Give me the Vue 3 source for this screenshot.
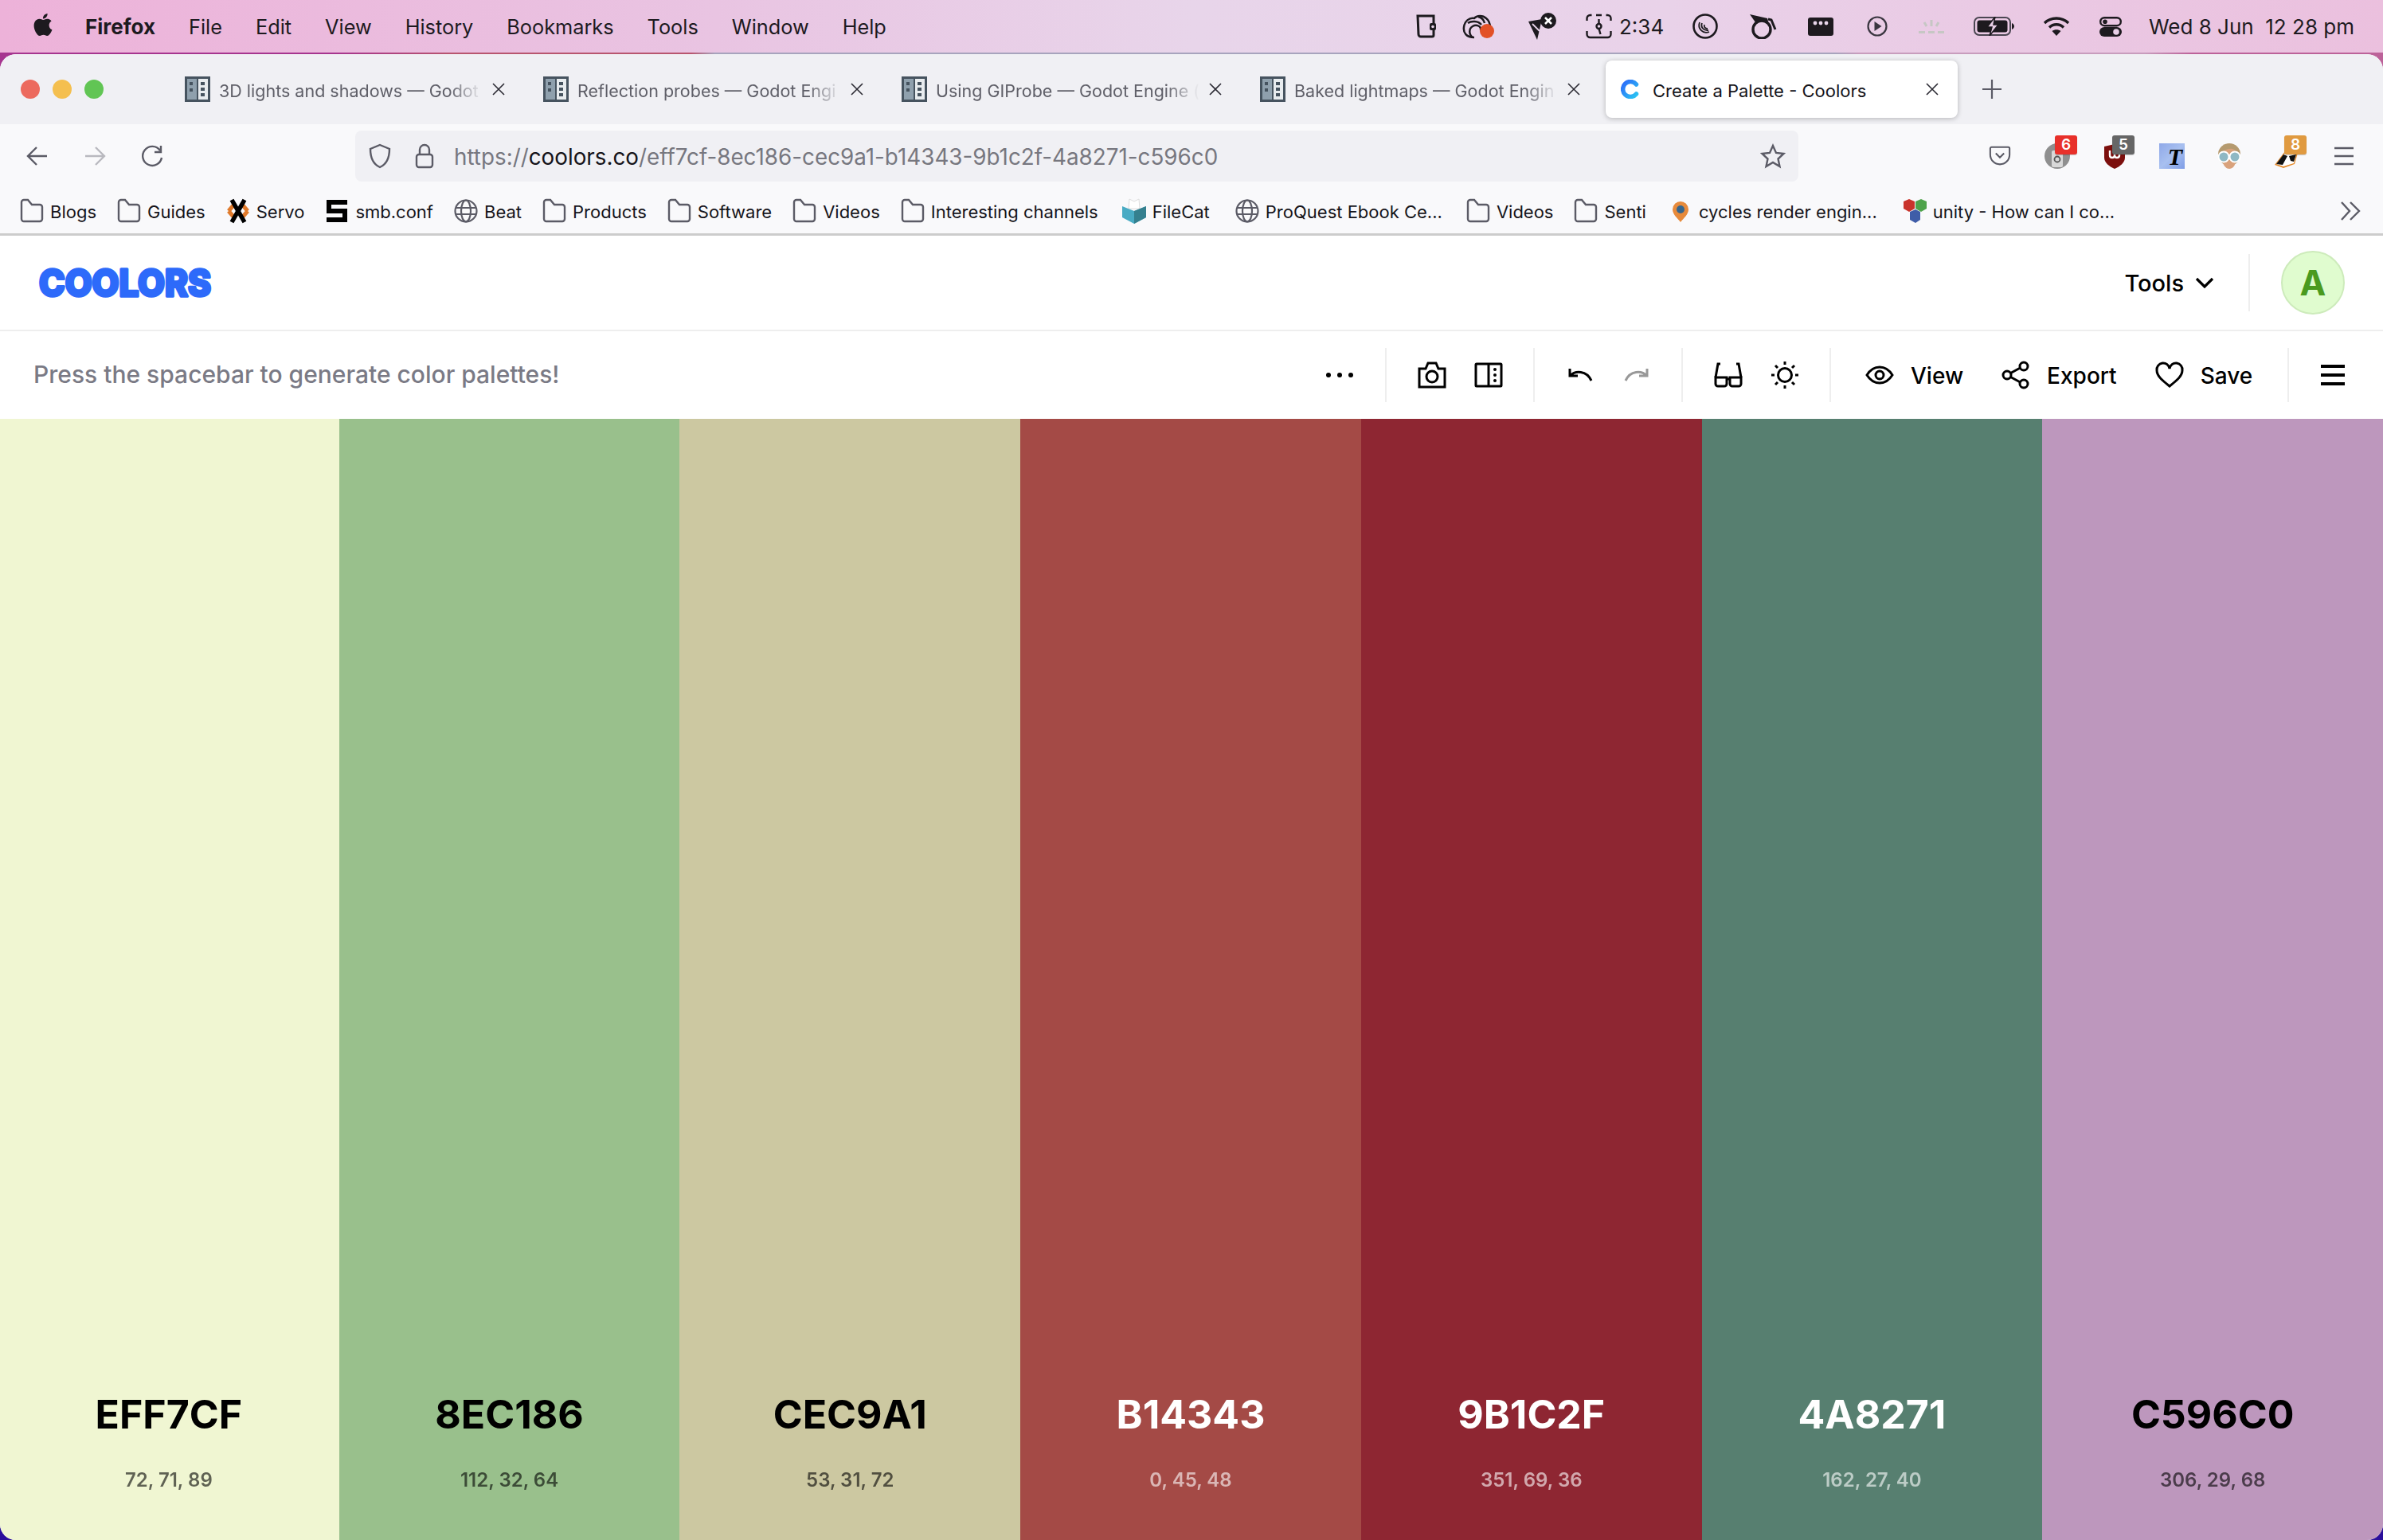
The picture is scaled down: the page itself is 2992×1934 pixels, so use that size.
<template>
  <div class="screen">
    <!-- mac menu bar -->
    <div class="menubar">
      <svg class="apple" viewBox="0 0 24 24"><path fill="#1d1a1f" d="M12.152 6.896c-.948 0-2.415-1.078-3.96-1.04-2.04.027-3.91 1.183-4.961 3.014-2.117 3.675-.546 9.103 1.519 12.09 1.013 1.454 2.208 3.09 3.792 3.039 1.52-.065 2.09-.987 3.935-.987 1.831 0 2.35.987 3.96.948 1.637-.026 2.676-1.48 3.676-2.948 1.156-1.688 1.636-3.325 1.662-3.415-.039-.013-3.182-1.221-3.22-4.857-.026-3.04 2.48-4.494 2.597-4.559-1.429-2.09-3.623-2.324-4.39-2.376-2-.156-3.675 1.09-4.61 1.09zM15.53 3.83c.843-1.012 1.4-2.427 1.245-3.83-1.207.052-2.662.805-3.532 1.818-.78.896-1.454 2.338-1.273 3.714 1.338.104 2.715-.688 3.559-1.701"/></svg>
      <span class="app-name">Firefox</span>
      <span v-for="m in menus" :key="m" class="menu">{{ m }}</span>

      <div class="status">
        <svg class="st st-phone" viewBox="0 0 26 32"><path fill="none" stroke="#1d1a1f" stroke-width="3" d="M3 3h20v24a2 2 0 0 1-2 2H7a3 3 0 0 1-3-3z"/><rect x="18" y="12" width="8" height="9" rx="2" fill="#1d1a1f"/><circle cx="22" cy="16.500" r="1.800" fill="#e8d5ea"/></svg>
        <svg class="st st-cloud" viewBox="0 0 40 32"><g fill="none" stroke="#1d1a1f" stroke-width="2.500"><path d="M15 30C5 30 1 24 2 17 3 9 9 5 15 6c3-4 11-4 15 0 4 3 5 8 5 12"/><path d="M13 30c-5-4-5-11 0-14s11 0 10 5M7 12c4-3 13-3 17 2M20 4c4 1 7 4 8 8"/></g><circle cx="31" cy="22" r="9" fill="#e25026"/></svg>
        <svg class="st st-map" viewBox="0 0 36 34"><path fill="#1d1a1f" d="M0 11l17-3-6 26z"/><path fill="none" stroke="#e8d5ea" stroke-width="1.800" d="M5 14l9 9"/><circle cx="25" cy="10" r="10" fill="#1d1a1f"/><path stroke="#fff" stroke-width="2.500" d="M21 6l8 8m0-8l-8 8"/></svg>
        <svg class="st st-clock" viewBox="0 0 33 32"><g fill="none" stroke="#1d1a1f" stroke-width="2.400"><path d="M1.500 9V6a4 4 0 0 1 4-4h2M31.500 9V6a4 4 0 0 0-4-4h-2M1.500 22v4a4 4 0 0 0 4 4h22a4 4 0 0 0 4-4v-4M13 2h7"/><circle cx="16.500" cy="16" r="3"/><path d="M16.500 7v6M16.500 19l2 7"/></g></svg>
        <span class="st-time">2:34</span>
        <svg class="st st-disc" viewBox="0 0 32 32"><circle cx="16" cy="16" r="14.500" fill="none" stroke="#1d1a1f" stroke-width="2.600"/><g fill="none" stroke="#1d1a1f" stroke-width="1.800"><path d="M9 11c-3 8 4 15 12 12"/><path d="M12 12c-2 5 2 10 8 9"/><path d="M15 14c-1 3 1 5 4 5"/></g></svg>
        <svg class="st st-kettle" viewBox="0 0 36 32"><path fill="#1d1a1f" d="M1 1l22 5 1 4-16 1z"/><circle cx="16" cy="20" r="11" fill="none" stroke="#1d1a1f" stroke-width="3.400"/><path fill="none" stroke="#1d1a1f" stroke-width="3" d="M24 7l4 1 5 12"/></svg>
        <svg class="st st-win" viewBox="0 0 32 23"><rect width="32" height="23" rx="3" fill="#1d1a1f"/><circle cx="9" cy="7" r="2.400" fill="#e8d5ea"/><circle cx="16" cy="7" r="2.400" fill="#e8d5ea"/><circle cx="23" cy="7" r="2.400" fill="#e8d5ea"/></svg>
        <svg class="st st-play" viewBox="0 0 26 26"><circle cx="13" cy="13" r="11.500" fill="none" stroke="#3a3640" stroke-width="2.200"/><path fill="#3a3640" d="M9.500 7l9 6-9 6z"/></svg>
        <svg class="st st-bright" viewBox="0 0 34 17"><g stroke="#c6c7c4" stroke-width="3" fill="none"><path d="M17 0v8M8 3l3 5M26 3l-3 5"/><path d="M1 15.500h8M13 15.500h8M25 15.500h8"/></g></svg>
        <svg class="st st-battery" viewBox="0 0 51 24"><rect x="1" y="1" width="45" height="22" rx="6" fill="none" stroke="#4b4652" stroke-width="2"/><rect x="4.500" y="4.500" width="38" height="15" rx="3" fill="#1d1a1f"/><path fill="#1d1a1f" d="M48 8c2 1 3 2.500 3 4s-1 3-3 4z"/><path fill="#e8cfe6" stroke="#1d1a1f" stroke-width="1.500" d="M27 0L17 13h6l-3 11 11-14h-6z"/></svg>
        <svg class="st st-wifi" viewBox="0 0 34 24"><g fill="none" stroke="#1d1a1f" stroke-width="3.400"><path d="M2 8c8-8 22-8 30 0"/><path d="M8 13.500c5-5 13-5 18 0"/></g><path fill="#1d1a1f" d="M17 24l-5.500-6c3-2.500 8-2.500 11 0z"/></svg>
        <svg class="st st-control" viewBox="0 0 28 25"><rect x="1.200" y="1.200" width="25.600" height="10" rx="5" fill="none" stroke="#1d1a1f" stroke-width="2.400"/><circle cx="7" cy="6.200" r="2.800" fill="#1d1a1f"/><rect y="13" width="28" height="12" rx="6" fill="#1d1a1f"/><circle cx="21" cy="19" r="3.800" fill="#e8cfe6"/></svg>
        <span class="st-date">Wed 8 Jun&nbsp; 12 28 pm</span>
      </div>
    </div>

    <div class="window">
      <!-- tab strip -->
      <div class="tabstrip">
        <div class="lights">
          <i class="light red"></i><i class="light yellow"></i><i class="light green"></i>
        </div>
        <div class="tabs">
          <div v-for="t in tabs" :key="t" class="tab">
            <svg class="tab-icon" viewBox="0 0 32 32"><use href="#doc"/></svg>
            <span class="tab-title">{{ t }}</span>
            <svg class="tab-close" viewBox="0 0 16 16"><path d="M1 1l14 14M15 1L1 15"/></svg>
          </div>
          <div class="tab active">
            <svg class="tab-icon coolors-c" viewBox="0 0 24 24"><path d="M19.500 6A9.500 9.500 0 1 0 19.500 18" fill="none" stroke="url(#cgrad)" stroke-width="5.500" stroke-linecap="round"/></svg>
            <span class="tab-title">Create a Palette - Coolors</span>
            <svg class="tab-close" viewBox="0 0 16 16"><path d="M1 1l14 14M15 1L1 15"/></svg>
          </div>
        </div>
        <svg class="new-tab" viewBox="0 0 26 26"><path d="M13 1v24M1 13h24"/></svg>
      </div>

      <!-- nav toolbar -->
      <div class="navbar">
        <div class="nav-left">
          <svg class="nav-icon" viewBox="0 0 30 30"><path d="M27 15H4M14 4L3 15l11 11"/></svg>
          <svg class="nav-icon faded" viewBox="0 0 30 30"><path d="M3 15h23M16 4l11 11-11 11"/></svg>
          <svg class="nav-icon" viewBox="0 0 30 30"><path d="M25 8a12 12 0 1 0 2 9M26 2v8h-8"/></svg>
        </div>
        <div class="urlbar">
          <svg class="shield" viewBox="0 0 30 32"><path d="M15 2l12 5c0 11-3 19-12 23C6 26 3 18 3 7z"/></svg>
          <svg class="lock" viewBox="0 0 24 32"><rect x="2" y="14" width="20" height="16" rx="3"/><path d="M6 14V8a6 6 0 0 1 12 0v6"/></svg>
          <span class="url"><span class="url-dim">https://</span>coolors.co<span class="url-dim">/eff7cf-8ec186-cec9a1-b14343-9b1c2f-4a8271-c596c0</span></span>
          <svg class="star" viewBox="0 0 32 32"><path d="M16 3l4 9 9.500 1-7 6.500 2 9.500-8.500-5-8.500 5 2-9.500-7-6.500 9.500-1z"/></svg>
        </div>
        <div class="extensions">
          <div class="ext">
            <svg class="pocket" viewBox="0 0 32 30"><path class="line" d="M4 2h24a2 2 0 0 1 2 2v9a14 14 0 0 1-28 0V4a2 2 0 0 1 2-2zM10 11l6 6 6-6"/></svg>
          </div>
          <div class="ext">
            <svg class="ext-icon" viewBox="0 0 32 32"><circle cx="16" cy="16" r="16" fill="#8f8f8f"/><rect x="9" y="9" width="14" height="21" rx="2" fill="#d8d8d8"/><circle cx="16" cy="20" r="3.500" fill="none" stroke="#555" stroke-width="1.800"/></svg>
            <span class="badge b-red">6</span>
          </div>
          <div class="ext">
            <svg class="ext-icon" viewBox="0 0 32 32"><path fill="#7c0f0d" d="M3 4l13-3 13 3v14c0 6-6 11-13 14C9 29 3 24 3 18z"/><path fill="none" stroke="#fff" stroke-width="2.400" d="M10 9v6c0 4 6 4 6 0v-4 4c0 4 6 4 6 0V9"/></svg>
            <span class="badge b-grey">5</span>
          </div>
          <div class="ext">
            <div class="t-icon"><span>T</span></div>
          </div>
          <div class="ext">
            <svg class="ext-icon" viewBox="0 0 32 32"><circle cx="16" cy="14" r="14" fill="#b59a6f"/><path fill="#d9a27c" d="M8 10c4-2 12-6 16 0v12c0 6-4 10-8 10s-8-4-8-10z"/><circle cx="9" cy="17" r="6.500" fill="#8fb8c4" stroke="#fff" stroke-width="2"/><circle cx="23" cy="17" r="6.500" fill="#8fb8c4" stroke="#fff" stroke-width="2"/></svg>
          </div>
          <div class="ext">
            <svg class="ext-icon" viewBox="0 0 32 32"><path fill="#e58a2a" d="M1 27L14 10l16 2-4 14-14 5z"/><path fill="#fff" d="M3 26L15 11l13 3-3 11-13 4z"/><path fill="#111" d="M3 26l9-12 5 2-6 11zM19 16l9-2-3 9-4-1z"/></svg>
            <span class="badge b-orange">8</span>
          </div>
          <div class="ext">
            <svg class="ext-icon" viewBox="0 0 32 32"><path class="line" d="M4 6h24M4 16h24M4 26h24"/></svg>
          </div>
        </div>
      </div>

      <!-- bookmarks -->
      <div class="bookmarks">
        <div v-for="b in bookmarks" :key="b.label + b.icon" class="bm" :style="{ marginLeft: (b.nudge || 0) + 'px' }">
          <svg v-if="b.icon === 'folder'" class="bm-icon" viewBox="0 0 30 32"><use href="#folder"/></svg>
          <svg v-else-if="b.icon === 'globe'" class="bm-icon" viewBox="0 0 30 32"><use href="#globe"/></svg>
          <svg v-else-if="b.icon === 'servo'" class="bm-icon" viewBox="0 0 30 32"><path fill="none" stroke="#e07a2b" stroke-width="5" d="M3 16l6-7M27 16l-6-7M3 16l6 7M27 16l-6 7"/><path fill="none" stroke="#000" stroke-width="5.500" d="M7 2l16 28M23 2L7 30"/></svg>
          <svg v-else-if="b.icon === 'smb'" class="bm-icon" viewBox="0 0 30 32"><path fill="none" stroke="#000" stroke-width="6" d="M28 5H5v11h20v11H2"/></svg>
          <svg v-else-if="b.icon === 'box'" class="bm-icon" viewBox="0 0 30 32"><path fill="#fff" stroke="#ddd" d="M9 1l6 3 6-3 1 12H8z"/><path fill="#49abc4" d="M0 10l15 6 15-6v14l-15 8-15-8z"/><path fill="#35808f" d="M15 16l15-6v14l-15 8z"/></svg>
          <svg v-else-if="b.icon === 'pin'" class="bm-icon" viewBox="0 0 30 32"><path fill="#e78a3b" d="M15 4a10 10 0 0 1 10 10c0 6-6 11-10 16-4-5-10-10-10-16A10 10 0 0 1 15 4z"/><circle cx="15" cy="14" r="5" fill="#36658c"/></svg>
          <svg v-else-if="b.icon === 'cubes'" class="bm-icon" viewBox="0 0 30 32"><path fill="#c9332b" d="M1 4l7-3 7 3v9l-7 4-7-4z"/><path fill="#4ea34b" d="M16 4l7-3 7 3v9l-7 4-7-4z"/><path fill="#3f5da8" d="M9 17l7-3 6 3v10l-6 4-7-4z"/></svg>
          <span class="bm-label">{{ b.label }}</span>
        </div>
        <svg class="bm-more" viewBox="0 0 26 26"><path d="M2 2l10 11L2 24M13 2l11 11-11 11"/></svg>
      </div>

      <!-- site header -->
      <div class="site-head">
        <svg class="logo" viewBox="0 0 222 60"><text class="logo-text" x="3" y="47" textLength="216" lengthAdjust="spacingAndGlyphs">coolors</text></svg>
        <div class="tools">
          <span>Tools</span>
          <svg class="chev" viewBox="0 0 24 14"><path d="M2 2l10 10L22 2"/></svg>
        </div>
        <div class="head-divider"></div>
        <div class="avatar">A</div>
      </div>

      <!-- generator toolbar -->
      <div class="gen-bar">
        <span class="hint">Press the spacebar to generate color palettes!</span>
        <div class="gen-right">
          <svg class="dots" viewBox="0 0 36 8"><circle cx="4" cy="4" r="3"/><circle cx="18" cy="4" r="3"/><circle cx="32" cy="4" r="3"/></svg>
          <div class="group">
            <div class="cell"><svg class="gi" viewBox="0 0 36 36"><path d="M2 10h8l3-7h10l3 7h8v23H2z"/><circle cx="18" cy="20" r="7"/></svg></div>
            <div class="cell"><svg class="gi" viewBox="0 0 36 32"><rect x="2" y="2" width="32" height="28" rx="1"/><path d="M18 2v28"/><circle class="fill" cx="26" cy="9" r="2"/><circle class="fill" cx="26" cy="16" r="2"/><circle class="fill" cx="26" cy="23" r="2"/></svg></div>
          </div>
          <div class="group">
            <div class="cell"><svg class="gi small" viewBox="0 0 32 20"><path d="M3 11C10 4 24 4 30 17M3 2v9h10"/></svg></div>
            <div class="cell"><svg class="gi small faded" viewBox="0 0 32 20"><path d="M29 11C22 4 8 4 2 17M29 2v9H19"/></svg></div>
          </div>
          <div class="group">
            <div class="cell"><svg class="gi" viewBox="0 0 36 32"><path d="M8 2H5L2 19M28 2h3l3 17"/><path d="M2 19h14v8a3 3 0 0 1-3 3H5a3 3 0 0 1-3-3zM20 19h14v8a3 3 0 0 1-3 3h-8a3 3 0 0 1-3-3zM16 21h4"/></svg></div>
            <div class="cell"><svg class="gi" viewBox="0 0 36 36"><circle cx="18" cy="18" r="8.500"/><path d="M18 1v4M18 31v4M1 18h4M31 18h4M6 6l3 3M27 27l3 3M6 30l3-3M27 9l3-3"/></svg></div>
          </div>
          <div class="group wide">
            <div class="action view">
              <svg class="gi" viewBox="0 0 36 24"><path d="M2 12C7 4 13 2 18 2s11 2 16 10c-5 8-11 10-16 10S7 20 2 12z"/><circle cx="18" cy="12" r="5"/></svg>
              <span class="action-label">View</span>
            </div>
            <div class="action export">
              <svg class="gi" viewBox="0 0 36 36"><circle cx="7" cy="18" r="5"/><circle cx="28" cy="7" r="5"/><circle cx="28" cy="29" r="5"/><path d="M11.500 15.500l12-6.500M11.500 20.500l12 6.500"/></svg>
              <span class="action-label">Export</span>
            </div>
            <div class="action save">
              <svg class="gi" viewBox="0 0 36 32"><path d="M18 30C8 22 2 17 2 10a8 8 0 0 1 16-2 8 8 0 0 1 16 2c0 7-6 12-16 20z"/></svg>
              <span class="action-label">Save</span>
            </div>
          </div>
          <div class="burger-cell">
            <svg class="burger" viewBox="0 0 32 28"><path d="M1 3h30M1 14h30M1 25h30"/></svg>
          </div>
        </div>
      </div>

      <!-- palette columns -->
      <div class="palette">
        <div v-for="c in colors" :key="c.hex" class="col" :class="c.light ? 'on-light' : 'on-dark'" :style="{ background: c.bg }">
          <div class="hex">{{ c.hex }}</div>
          <div class="rgb">{{ c.rgb }}</div>
        </div>
      </div>
    </div>

    <!-- shared symbols -->
    <svg class="defs" width="0" height="0">
      <defs>
        <linearGradient id="cgrad" x1="0" y1="0" x2="1" y2="1">
          <stop offset="0" stop-color="#2d6afa"/><stop offset="1" stop-color="#2bc4f2"/>
        </linearGradient>
        <symbol id="doc" viewBox="0 0 32 32">
          <rect width="32" height="32" fill="#46535f"/>
          <rect x="3" y="3" width="12" height="26" fill="#8fa0ad"/>
          <rect x="17" y="3" width="12" height="26" fill="#e8ecef"/>
          <rect x="6" y="7" width="4" height="4" fill="#46535f"/>
          <rect x="6" y="15" width="4" height="4" fill="#46535f"/>
          <rect x="20" y="7" width="5" height="4" fill="#46535f"/>
          <rect x="20" y="14" width="5" height="4" fill="#46535f"/>
          <rect x="20" y="21" width="5" height="4" fill="#46535f"/>
        </symbol>
        <symbol id="folder" viewBox="0 0 30 32">
          <path fill="none" stroke="#5b5b66" stroke-width="2.400" d="M2 5a3 3 0 0 1 3-3h5l5 6h10a3 3 0 0 1 3 3v15a3 3 0 0 1-3 3H5a3 3 0 0 1-3-3z"/>
        </symbol>
        <symbol id="globe" viewBox="0 0 30 32">
          <g fill="none" stroke="#5b5b66" stroke-width="2.200">
            <circle cx="15" cy="16" r="13.500"/>
            <ellipse cx="15" cy="16" rx="6" ry="13.500"/>
            <path d="M2 12h26M2 20h26"/>
          </g>
        </symbol>
      </defs>
    </svg>
  </div>
</template>

<script setup>
const menus = ['File', 'Edit', 'View', 'History', 'Bookmarks', 'Tools', 'Window', 'Help']

// titles are cut where the tab fades them out
const tabs = [
  '3D lights and shadows — Godot',
  'Reflection probes — Godot Engi',
  'Using GIProbe — Godot Engine (',
  'Baked lightmaps — Godot Engin',
]

const bookmarks = [
  { icon: 'folder', label: 'Blogs' },
  { icon: 'folder', label: 'Guides' },
  { icon: 'servo', label: 'Servo' },
  { icon: 'smb', label: 'smb.conf' },
  { icon: 'globe', label: 'Beat' },
  { icon: 'folder', label: 'Products' },
  { icon: 'folder', label: 'Software' },
  { icon: 'folder', label: 'Videos' },
  { icon: 'folder', label: 'Interesting channels' },
  { icon: 'box', label: 'FileCat', nudge: 4 },
  { icon: 'globe', label: 'ProQuest Ebook Ce...', nudge: 6 },
  { icon: 'folder', label: 'Videos ', nudge: 4 },
  { icon: 'folder', label: 'Senti' },
  { icon: 'pin', label: 'cycles render engin...', nudge: 2 },
  { icon: 'cubes', label: 'unity - How can I co...', nudge: 6 },
]

const colors = [
  { hex: 'EFF7CF', rgb: '72, 71, 89', bg: '#f0f6d2', light: true },
  { hex: '8EC186', rgb: '112, 32, 64', bg: '#99c08c', light: true },
  { hex: 'CEC9A1', rgb: '53, 31, 72', bg: '#ccc8a1', light: true },
  { hex: 'B14343', rgb: '0, 45, 48', bg: '#a44a46', light: false },
  { hex: '9B1C2F', rgb: '351, 69, 36', bg: '#8e2632', light: false },
  { hex: '4A8271', rgb: '162, 27, 40', bg: '#577f70', light: false },
  { hex: 'C596C0', rgb: '306, 29, 68', bg: '#bd97bd', light: true },
]
</script>

<style>
html, body { margin: 0; padding: 0; }
</style>

<style scoped>
.screen {
  width: 2992px;
  height: 1934px;
  display: flex;
  flex-direction: column;
  overflow: hidden;
  font-family: Inter, "Liberation Sans", sans-serif;
  color: #1d1a1f;
  background:
    linear-gradient(#2b0f9b, #2b0f9b) bottom / 100% 40px no-repeat,
    linear-gradient(90deg, #a6358f 0, #a6358f 14%, #b8566f 19%, #b8566f 29%, #a7a4bd 30%, #a7a4bd 77%, #c89dbd 78%, #c89dbd 90%, #bc6299 92%, #bc6299 100%);
}

/* menu bar */
.menubar {
  height: 66px;
  flex: none;
  display: flex;
  align-items: center;
  padding-left: 40px;
  gap: 42px;
  font-size: 25.300px;
  background: linear-gradient(90deg, #edb2d9 0, #e9c4e2 30%, #e8d5ea 50%, #e9d2e9 70%, #ebc0de 100%);
}
.apple { width: 28px; height: 32px; margin-top: -4px; margin-right: -3px; }
.app-name { font-weight: 700; font-size: 26px; }
.menu { font-weight: 400; }
.status {
  margin-left: auto;
  display: flex;
  align-items: center;
  padding-right: 35px;
  height: 100%;
  font-size: 26px;
}
.st { flex: none; height: 32px; }
.st-phone { width: 26px; }
.st-cloud { width: 40px; margin-left: 33px; }
.st-map { width: 36px; margin-left: 43px; height: 34px; }
.st-clock { width: 33px; margin-left: 36px; }
.st-time { margin-left: 9px; width: 55px; white-space: nowrap; }
.st-disc { width: 32px; margin-left: 37px; }
.st-kettle { width: 36px; margin-left: 39px; }
.st-win { width: 32px; height: 23px; margin-left: 38px; }
.st-play { width: 26px; height: 26px; margin-left: 42px; }
.st-bright { width: 34px; height: 17px; margin-left: 38px; }
.st-battery { width: 51px; height: 24px; margin-left: 36px; }
.st-wifi { width: 34px; height: 24px; margin-left: 36px; }
.st-control { width: 28px; height: 25px; margin-left: 37px; }
.st-date { margin-left: 34px; width: 259px; white-space: nowrap; }

/* browser window */
.window {
  flex: 1;
  margin-top: 2px;
  border-radius: 20px;
  overflow: hidden;
  display: flex;
  flex-direction: column;
  background: #fff;
  min-height: 0;
}

.tabstrip {
  height: 88px;
  flex: none;
  background: #f0f0f4;
  display: flex;
  align-items: center;
}
.lights {
  width: 216px;
  flex: none;
  display: flex;
  gap: 16px;
  padding-left: 26px;
  box-sizing: border-box;
}
.light { width: 24px; height: 24px; border-radius: 50%; display: block; }
.red { background: #ec6a5e; }
.yellow { background: #f4bf4f; }
.green { background: #61c554; }

.tabs { display: flex; gap: 8px; height: 72px; }
.tab {
  width: 442px;
  height: 72px;
  padding: 0 24px 0 16px;
  box-sizing: border-box;
  display: flex;
  align-items: center;
  border-radius: 8px;
  font-size: 21.500px;
  color: #5f5f68;
}
.tab.active {
  background: #fff;
  color: #15141a;
  font-size: 22px;
  box-shadow: 0 1px 6px rgba(0, 0, 0, 0.25);
}
.tab-icon { width: 32px; height: 32px; flex: none; }
.coolors-c { width: 24px; height: 24px; margin-left: 3px; }
.tab-title {
  flex: 1;
  margin-left: 11px;
  padding-top: 3px;
  white-space: nowrap;
  min-width: 0;
  -webkit-mask-image: linear-gradient(90deg, #000 calc(100% - 50px), transparent calc(100% - 8px));
  mask-image: linear-gradient(90deg, #000 calc(100% - 50px), transparent calc(100% - 8px));
}
.tab.active .tab-title { -webkit-mask-image: none; mask-image: none; margin-left: 16px; }
.tab-close {
  width: 16px;
  height: 16px;
  margin-left: 4px;
  flex: none;
  fill: none;
  stroke: #2b2a33;
  stroke-width: 1.600;
}
.new-tab {
  width: 26px;
  height: 26px;
  margin-left: 30px;
  fill: none;
  stroke: #5b5b66;
  stroke-width: 2.200;
}

.navbar {
  height: 80px;
  flex: none;
  background: #f9f9fb;
  display: flex;
  align-items: center;
}
.nav-left { display: flex; padding-left: 11px; width: 227px; box-sizing: border-box; }
.nav-icon {
  width: 30px;
  height: 30px;
  padding: 0 21px;
  fill: none;
  stroke: #5b5b66;
  stroke-width: 2.400;
  flex: none;
}
.faded { opacity: 0.4; }
.urlbar {
  margin-left: 219px;
  width: 1812px;
  height: 64px;
  background: #f0f0f4;
  border-radius: 8px;
  display: flex;
  align-items: center;
  padding-left: 16px;
  padding-right: 16px;
  box-sizing: border-box;
}
.shield, .lock, .star, .line {
  fill: none;
  stroke: #5b5b66;
  stroke-width: 2.400;
}
.shield { width: 30px; height: 32px; }
.lock { width: 24px; height: 32px; margin-left: 29px; }
.url {
  margin-left: 25px;
  padding-top: 2px;
  font-size: 27.800px;
  color: #15141a;
  flex: 1;
  white-space: nowrap;
}
.url-dim { color: #77777f; }
.star { width: 32px; height: 32px; }

.extensions { display: flex; margin-left: 217px; }
.ext {
  width: 72px;
  height: 48px;
  display: flex;
  align-items: center;
  justify-content: center;
  position: relative;
}
.ext-icon { width: 32px; height: 32px; }
.pocket { width: 28px; height: 26px; }
.t-icon {
  width: 32px;
  height: 32px;
  background: linear-gradient(135deg, #8fa8e8, #a8c0f0 50%, #7f9de6);
  display: flex;
  align-items: flex-end;
  justify-content: flex-end;
  color: #000;
  font: italic 700 30px/30px "Liberation Serif", serif;
  padding-right: 3px;
  box-sizing: border-box;
}
.badge {
  position: absolute;
  left: 33px;
  top: -2px;
  width: 28px;
  height: 24px;
  border-radius: 3px;
  color: #fff;
  font-size: 19px;
  font-weight: 600;
  line-height: 24px;
  text-align: center;
  box-shadow: 0 1px 1px rgba(0, 0, 0, 0.2);
}
.b-red { background: #e8302a; }
.b-grey { background: #666; }
.b-orange { background: #e09a40; }

.bookmarks {
  height: 57px;
  flex: none;
  background: #f9f9fb;
  display: flex;
  align-items: center;
  padding-left: 25px;
  gap: 26px;
  border-bottom: 3px solid #ccc;
  font-size: 22px;
  color: #15141a;
}
.bm { display: flex; align-items: center; gap: 8px; }
.bm-icon { width: 30px; height: 32px; flex: none; }
.bm-label { padding-top: 2px; }
.bm-more {
  width: 26px;
  height: 26px;
  margin-left: auto;
  margin-right: 28px;
  fill: none;
  stroke: #5b5b66;
  stroke-width: 2.400;
}

/* coolors header */
.site-head {
  height: 118px;
  flex: none;
  border-bottom: 2px solid #eee;
  display: flex;
  align-items: center;
  padding-left: 46px;
  padding-right: 48px;
}
.logo { width: 222px; height: 60px; overflow: visible; }
.logo-text {
  font-family: Inter, sans-serif;
  font-weight: 800;
  font-size: 46px;
  text-transform: uppercase;
  fill: #2d6afa;
  stroke: #2d6afa;
  stroke-width: 3.500;
  stroke-linejoin: round;
}
.tools {
  margin-left: auto;
  display: flex;
  align-items: center;
  gap: 14px;
  font-size: 29px;
  font-weight: 500;
  color: #000;
}
.chev {
  width: 24px;
  height: 14px;
  fill: none;
  stroke: #000;
  stroke-width: 3.200;
}
.head-divider {
  width: 2px;
  height: 72px;
  background: #eee;
  margin-left: 43px;
  margin-right: 39px;
}
.avatar {
  width: 80px;
  height: 80px;
  border-radius: 50%;
  background: #e0fccf;
  border: 2px solid #cdebbb;
  box-sizing: border-box;
  color: #4a9a1f;
  font-size: 44px;
  font-weight: 700;
  line-height: 76px;
  text-align: center;
}

.gen-bar {
  height: 110px;
  flex: none;
  display: flex;
  align-items: center;
  padding-left: 42px;
}
.hint { font-size: 30px; font-weight: 500; color: #7a7a85; padding-bottom: 2px; }
.gen-right { margin-left: auto; display: flex; align-items: center; height: 68px; }
.dots { width: 36px; height: 8px; fill: #000; margin-right: 39px; }
.group {
  display: flex;
  align-items: center;
  height: 68px;
  padding: 0 21px;
  width: 186px;
  box-sizing: border-box;
  border-left: 2px solid #eee;
}
.group.wide { width: 575px; padding: 0; }
.cell { width: 72px; display: flex; justify-content: center; align-items: center; }
.gi {
  width: 36px;
  height: 36px;
  fill: none;
  stroke: #000;
  stroke-width: 3;
  flex: none;
}
.gi .fill { fill: #000; stroke: none; }
.gi.small { width: 32px; height: 20px; }
.action {
  display: flex;
  align-items: center;
  font-size: 28px;
  font-weight: 500;
  color: #000;
  gap: 21px;
}
.action-label { padding-top: 2px; }
.view { margin-left: 43px; }
.export { margin-left: 48px; }
.save { margin-left: 48px; }
.burger-cell {
  border-left: 2px solid #eee;
  height: 68px;
  width: 120px;
  padding-right: 9px;
  box-sizing: border-box;
  display: flex;
  align-items: center;
  justify-content: center;
}
.burger {
  width: 32px;
  height: 28px;
  fill: none;
  stroke: #000;
  stroke-width: 4;
}

/* palette */
.palette { flex: 1; display: flex; min-height: 0; margin-left: -2px; }
.col {
  flex: 1;
  display: flex;
  flex-direction: column;
  align-items: center;
  justify-content: flex-end;
  padding-bottom: 60px;
}
.on-light { color: #000; }
.on-dark { color: #fff; }
.hex { font-size: 50px; font-weight: 700; line-height: 60px; letter-spacing: 0; }
.rgb { font-size: 24px; font-weight: 600; line-height: 30px; margin-top: 38px; opacity: 0.6; }

.defs { position: absolute; }
</style>
